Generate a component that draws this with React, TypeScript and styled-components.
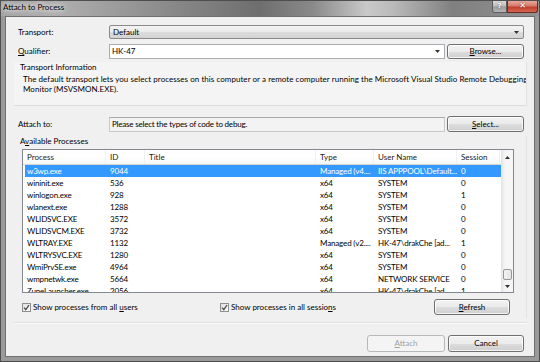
import React from 'react';
import styled, { createGlobalStyle } from 'styled-components';

const Global = createGlobalStyle`
  html, body { margin: 0; padding: 0; background: #fff; }
  body {
    width: 540px; height: 362px; overflow: hidden;
    font-family: Lato, "Liberation Sans", sans-serif;
    font-size: 8px; color: #000;
  }
`;

const Window = styled.div`
  width: 540px; height: 362px; box-sizing: border-box;
  display: flex; flex-direction: column;
  border: 1px solid #4e4e4e;
  background: #9a9a9a;
`;

const TitleBar = styled.div`
  height: 15px; flex: none; display: flex; align-items: flex-start;
  background: linear-gradient(90deg, #a4a4a4 0%, #b0b0b0 10%, #8c8c8c 30%, #6e6e6e 48%, #8a8a8a 58%, #c9c9c9 68%, #b9b9b9 73%, #808080 84%, #929292 100%);
  padding: 0 1px 0 2px;
`;

const TitleText = styled.div`
  flex: 1; line-height: 12px; font-size: 8px; color: #000;
  text-shadow: 0 0 4px #fff, 0 0 6px #fff;
`;

const TitleButtons = styled.div`
  display: flex; height: 12px;
`;

const CaptionButton = styled.div<{ $close?: boolean }>`
  width: ${p => (p.$close ? 31 : 15)}px; height: 12px; box-sizing: border-box;
  border: 1px solid ${p => (p.$close ? '#6b2a22' : '#5d5d5d')};
  border-top: none;
  border-radius: ${p => (p.$close ? '0 0 3px 0' : '0 0 0 3px')};
  background: ${p => (p.$close
    ? 'linear-gradient(#e9a799 0%, #d67a6b 45%, #c1402f 55%, #d7644f 100%)'
    : 'linear-gradient(#d9d9d9 0%, #bdbdbd 45%, #9c9c9c 55%, #b5b5b5 100%)')};
  color: #fff; font-family: "DejaVu Sans", sans-serif; font-weight: bold;
  font-size: ${p => (p.$close ? 8 : 7)}px; line-height: 10px; text-align: center;
  text-shadow: 0 0 2px rgba(0,0,0,.6);
`;

const Frame = styled.div`
  flex: 1; display: flex; padding: 0 4px 4px 4px; min-height: 0; min-width: 0;
`;

const Client = styled.div`
  flex: 1; box-sizing: border-box; min-width: 0; overflow: hidden;
  background: #f0f0f0; border: 1px solid #6f6f6f;
  padding: 8px 10px 0 12px;
  display: flex; flex-direction: column;
`;

const FieldRow = styled.div<{ $h: number; $mt?: number }>`
  display: grid; grid-template-columns: 89px minmax(0, 1fr) auto; column-gap: 2px;
  align-items: center; height: ${p => p.$h}px; margin-top: ${p => p.$mt ?? 0}px;
`;

const Label = styled.div`
  line-height: 11px; white-space: nowrap;
`;

const ComboBox = styled.div`
  grid-column: 2 / 4; height: 14px; box-sizing: border-box;
  border: 1px solid #8a8a8a; border-radius: 2px;
  background: linear-gradient(#f3f3f3 0%, #ebebeb 50%, #dddddd 51%, #d3d3d3 100%);
  display: flex; align-items: center; padding: 0 4px 0 3px;
`;

const TextBox = styled.div<{ $readonly?: boolean }>`
  height: 15px; box-sizing: border-box;
  border: 1px solid ${p => (p.$readonly ? '#c9c9c9' : '#abadb3')};
  border-top-color: ${p => (p.$readonly ? '#a9a9a9' : '#abadb3')};
  background: ${p => (p.$readonly ? '#f3f3f3' : '#fff')};
  display: flex; align-items: center; padding: 0 4px 0 2px;
`;

const BoxText = styled.span<{ $tight?: boolean }>`
  flex: 1; white-space: nowrap; line-height: 11px;
  letter-spacing: ${p => (p.$tight ? '-0.2px' : 'normal')};
`;

const Arrow = ({ up }: { up?: boolean }) => (
  <svg width="5" height="3" viewBox="0 0 5 3" style={{ display: 'block' }}>
    <polygon points={up ? '0,3 5,3 2.5,0' : '0,0 5,0 2.5,3'} fill="#333" />
  </svg>
);

const Button = styled.div<{ $w: number; $h?: number; $disabled?: boolean }>`
  width: ${p => p.$w}px; height: ${p => p.$h ?? 16}px; box-sizing: border-box;
  border: 1px solid ${p => (p.$disabled ? '#b5b9bc' : '#707070')};
  border-radius: 3px;
  background: ${p => (p.$disabled ? '#f4f4f4' : 'linear-gradient(#f2f2f2 0%, #ebebeb 50%, #dddddd 51%, #cfcfcf 100%)')};
  box-shadow: inset 0 0 0 1px ${p => (p.$disabled ? 'transparent' : 'rgba(255,255,255,.75)')};
  color: ${p => (p.$disabled ? '#a0a0a0' : '#000')};
  display: flex; align-items: center; justify-content: center;
  line-height: 11px; white-space: nowrap;
`;

const InfoPanel = styled.div`
  margin: 3px -3px 0 -4px; height: 44px; box-sizing: border-box;
  border-bottom: 1px solid #dcdcdc; border-right: 1px solid #e2e2e2;
  background: #f4f4f4;
  padding: 0 0 0 6px; min-width: 0; overflow: hidden;
`;

const PanelTitle = styled.div`
  line-height: 11px; white-space: nowrap;
`;

const InfoBody = styled.div`
  margin-top: 1px; padding-left: 3px;
`;

const InfoLine = styled.div`
  line-height: 10px; white-space: nowrap; letter-spacing: 0.05px;
`;

const Group = styled.div`
  margin: 4px -3px 0 -4px; padding: 0 0 3px 6px;
  display: flex; flex-direction: column;
  border-right: 1px solid #e2e2e2;
`;

const ListBox = styled.div`
  margin: 2px 0 0 2px; width: 492px; height: 144px; box-sizing: border-box;
  border: 1px solid #828790; background: #fff;
  display: flex; overflow: hidden;
`;

const ListMain = styled.div`
  flex: 1; overflow: hidden; display: flex; flex-direction: column;
`;

const COLS = '83px 39px 171px 58px 83px 43px';

const HeaderRow = styled.div`
  height: 14px; flex: none; display: grid; grid-template-columns: ${COLS};
  border-bottom: 1px solid #d5d5d5;
  background: linear-gradient(#ffffff 0%, #ffffff 50%, #f5f6f7 100%);
`;

const HeaderCell = styled.div`
  padding-left: 4px; line-height: 14px; color: #1a1a1a; white-space: nowrap;
  border-right: 1px solid #eef0f3;
`;

const Row = styled.div<{ $sel?: boolean }>`
  height: 12px; flex: none; margin-left: 2px;
  display: grid; grid-template-columns: 81px 39px 171px 58px 83px 43px;
  background: ${p => (p.$sel ? '#3399ff' : 'transparent')};
  color: ${p => (p.$sel ? '#fff' : '#000')};
`;

const Cell = styled.div<{ $first?: boolean }>`
  padding-left: ${p => (p.$first ? 2 : 4)}px; line-height: 12px;
  white-space: nowrap; overflow: hidden; letter-spacing: -0.15px;
`;

const ScrollBar = styled.div`
  width: 12px; flex: none; display: flex; flex-direction: column;
  background: linear-gradient(90deg, #e9e9e9 0%, #f5f5f5 30%, #f7f7f7 100%);
  border-left: 1px solid #e4e4e4; box-sizing: border-box;
`;

const ScrollBtn = styled.div<{ $h: number }>`
  height: ${p => p.$h}px; flex: none;
  display: flex; align-items: center; justify-content: center;
`;

const Track = styled.div`
  flex: 1; display: flex; flex-direction: column; justify-content: flex-end;
  align-items: center;
`;

const Thumb = styled.div`
  width: 9px; height: 11px; box-sizing: border-box;
  border: 1px solid #979797; border-radius: 2px;
  background: linear-gradient(90deg, #f3f3f3, #e4e4e4);
`;

const CheckRow = styled.div`
  margin-top: 6px; height: 16px; display: flex; align-items: center; padding-left: 2px;
`;

const CheckItem = styled.div<{ $w?: number }>`
  display: flex; align-items: center; gap: 2px;
  ${p => (p.$w ? `width: ${p.$w}px;` : 'flex: 1;')}
  white-space: nowrap; line-height: 11px;
`;

const CheckBoxBox = styled.div`
  width: 9px; height: 9px; box-sizing: border-box;
  border: 1px solid #8f8f8f; background: linear-gradient(135deg, #e0e0e0, #fbfbfb);
  display: flex; align-items: center; justify-content: center;
`;

const RefreshWrap = styled.div`
  margin-right: 16px;
`;

const Separator = styled.div`
  margin: 4px -3px 0 -4px; height: 1px; background: #dfdfdf;
  border-bottom: 1px solid #fbfbfb;
`;

const BottomRow = styled.div`
  margin-top: 11px; display: flex; justify-content: flex-end; gap: 3px;
`;

const Check = () => (
  <CheckBoxBox>
    <svg width="7" height="7" viewBox="0 0 7 7">
      <polyline points="1,3.6 2.8,5.6 6,1" fill="none" stroke="#4a4a4a" strokeWidth="1.3" />
    </svg>
  </CheckBoxBox>
);

const rows = [
  ['w3wp.exe', '9044', '', 'Managed (v4....', 'IIS APPPOOL\\Default...', '0'],
  ['wininit.exe', '536', '', 'x64', 'SYSTEM', '0'],
  ['winlogon.exe', '928', '', 'x64', 'SYSTEM', '1'],
  ['wlanext.exe', '1288', '', 'x64', 'SYSTEM', '0'],
  ['WLIDSVC.EXE', '3572', '', 'x64', 'SYSTEM', '0'],
  ['WLIDSVCM.EXE', '3732', '', 'x64', 'SYSTEM', '0'],
  ['WLTRAY.EXE', '1132', '', 'Managed (v2....', 'HK-47\\drakChe [ad...', '1'],
  ['WLTRYSVC.EXE', '1280', '', 'x64', 'SYSTEM', '0'],
  ['WmiPrvSE.exe', '4964', '', 'x64', 'SYSTEM', '0'],
  ['wmpnetwk.exe', '5664', '', 'x64', 'NETWORK SERVICE', '0'],
  ['ZuneLauncher.exe', '2056', '', 'x64', 'HK-47\\drakChe [ad...', '1'],
];

export default function App() {
  return (
    <>
      <Global />
      <Window>
        <TitleBar>
          <TitleText>Attach to Process</TitleText>
          <TitleButtons>
            <CaptionButton>?</CaptionButton>
            <CaptionButton $close>✕</CaptionButton>
          </TitleButtons>
        </TitleBar>
        <Frame>
          <Client>
            <FieldRow $h={14}>
              <Label>Transport:</Label>
              <ComboBox>
                <BoxText>Default</BoxText>
                <Arrow />
              </ComboBox>
            </FieldRow>
            <FieldRow $h={15} $mt={5}>
              <Label><u>Q</u>ualifier:</Label>
              <TextBox>
                <BoxText>HK-47</BoxText>
                <Arrow />
              </TextBox>
              <Button $w={77} $h={15}><span><u>B</u>rowse...</span></Button>
            </FieldRow>
            <InfoPanel>
              <PanelTitle>Transport Information</PanelTitle>
              <InfoBody>
                <InfoLine>The default transport lets you select processes on this computer or a remote computer running the Microsoft Visual Studio Remote Debugging</InfoLine>
                <InfoLine>Monitor (MSVSMON.EXE).</InfoLine>
              </InfoBody>
            </InfoPanel>
            <FieldRow $h={16} $mt={10}>
              <Label>Attach to:</Label>
              <TextBox $readonly>
                <BoxText $tight>Please select the types of code to debug.</BoxText>
              </TextBox>
              <Button $w={77}><span><u>S</u>elect...</span></Button>
            </FieldRow>
            <Group>
              <PanelTitle>A<u>v</u>ailable Processes</PanelTitle>
              <ListBox>
                <ListMain>
                  <HeaderRow>
                    <HeaderCell>Process</HeaderCell>
                    <HeaderCell>ID</HeaderCell>
                    <HeaderCell>Title</HeaderCell>
                    <HeaderCell>Type</HeaderCell>
                    <HeaderCell>User Name</HeaderCell>
                    <HeaderCell>Session</HeaderCell>
                  </HeaderRow>
                  {rows.map((r, i) => (
                    <Row key={i} $sel={i === 0}>
                      {r.map((c, j) => (
                        <Cell key={j} $first={j === 0}>{c}</Cell>
                      ))}
                    </Row>
                  ))}
                </ListMain>
                <ScrollBar>
                  <ScrollBtn $h={14}><Arrow up /></ScrollBtn>
                  <Track><Thumb /></Track>
                  <ScrollBtn $h={12}><Arrow /></ScrollBtn>
                </ScrollBar>
              </ListBox>
              <CheckRow>
                <CheckItem $w={198}>
                  <Check />
                  <span>Show processes from all <u>u</u>sers</span>
                </CheckItem>
                <CheckItem>
                  <Check />
                  <span>Show processes in all sessio<u>n</u>s</span>
                </CheckItem>
                <RefreshWrap>
                  <Button $w={76}><span><u>R</u>efresh</span></Button>
                </RefreshWrap>
              </CheckRow>
            </Group>
            <Separator />
            <BottomRow>
              <Button $w={78} $h={17} $disabled><span><u>A</u>ttach</span></Button>
              <Button $w={76} $h={17}>Cancel</Button>
            </BottomRow>
          </Client>
        </Frame>
      </Window>
    </>
  );
}
